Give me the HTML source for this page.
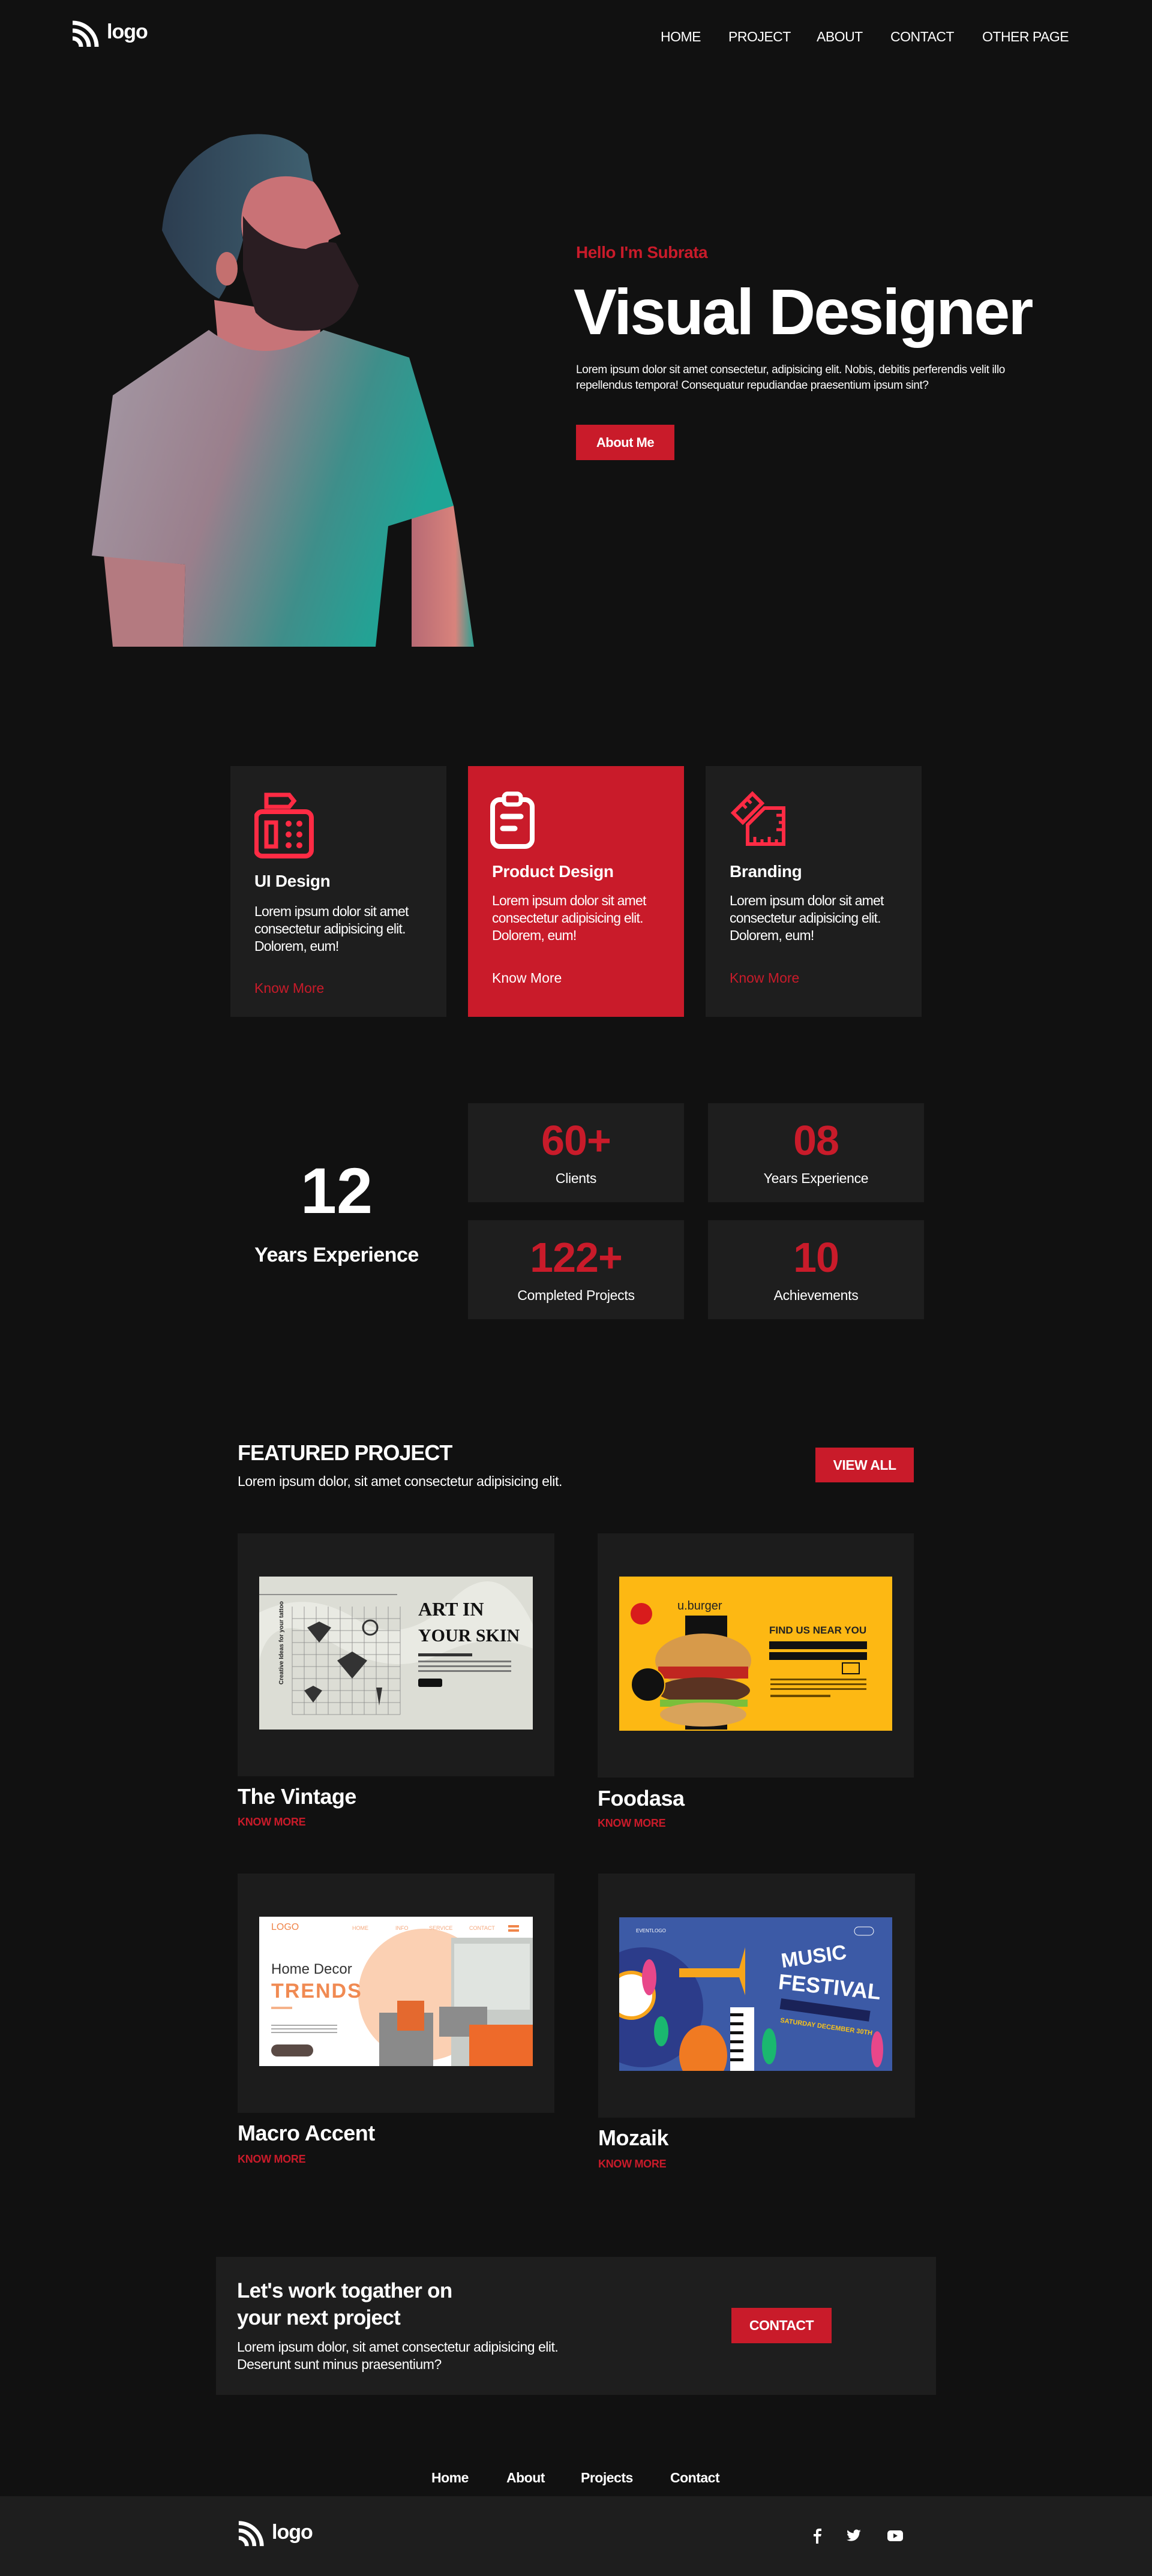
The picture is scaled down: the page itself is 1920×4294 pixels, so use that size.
<!DOCTYPE html>
<html><head><meta charset="utf-8">
<style>
*{margin:0;padding:0;box-sizing:border-box}
html,body{width:1920px;height:4294px;background:#111;overflow:hidden}
body{position:relative;font-family:"Liberation Sans",Arial,sans-serif;color:#fff}
.a{position:absolute}
.nav a{position:absolute;top:48px;font-size:23px;color:#fff;text-decoration:none;letter-spacing:-0.5px}
.card{position:absolute;background:#1e1e1e}
.card h3{position:absolute;left:40px;font-size:28px;font-weight:bold;letter-spacing:-0.3px}
.card p{position:absolute;left:40px;width:262px;font-size:23px;line-height:29px;letter-spacing:-0.8px}
.card .k{position:absolute;left:40px;font-size:23px;color:#c91b2a}
.stat{position:absolute;background:#1e1e1e;width:360px;height:165px;text-align:center}
.stat .n{position:absolute;left:0;right:0;top:22px;font-size:70px;font-weight:bold;color:#c91b2a;letter-spacing:-1px}
.stat .l{position:absolute;left:0;right:0;top:112px;font-size:23px;letter-spacing:-0.3px}
.pc{position:absolute;background:#1c1c1c}
.pt{position:absolute;font-size:36px;font-weight:bold;letter-spacing:-0.5px}
.km{position:absolute;font-size:18px;font-weight:bold;color:#c91b2a;letter-spacing:-0.3px}
.btn{position:absolute;background:#c91b2a;color:#fff;font-weight:bold;text-align:center}
</style></head><body>

<svg class="a" style="left:118px;top:32px" width="50" height="48" viewBox="0 0 50 48">
<path d="M3 6 A40 40 0 0 1 43 46" fill="none" stroke="#fff" stroke-width="7"/>
<path d="M3 19 A27 27 0 0 1 30 46" fill="none" stroke="#fff" stroke-width="7"/>
<path d="M3 32 A14 14 0 0 1 17 46" fill="none" stroke="#fff" stroke-width="7"/>
</svg>
<div class="a" style="left:178px;top:34px;font-size:34px;font-weight:bold;letter-spacing:-1px">logo</div>
<div class="nav">
<a style="left:1101px">HOME</a><a style="left:1214px">PROJECT</a><a style="left:1361px">ABOUT</a><a style="left:1484px">CONTACT</a><a style="left:1637px">OTHER PAGE</a>
</div>

<svg class="a" style="left:140px;top:200px" width="680" height="900" viewBox="0 0 680 900">
<defs>
<linearGradient id="sh" x1="0" x2="1" y1="0" y2="0.3">
<stop offset="0" stop-color="#a49aa6"/><stop offset="0.45" stop-color="#9a7f8c"/><stop offset="0.75" stop-color="#3f8e8a"/><stop offset="1" stop-color="#1fa596"/></linearGradient>
<linearGradient id="sk" x1="0" x2="1"><stop offset="0" stop-color="#b76a74"/><stop offset="0.7" stop-color="#d8837c"/><stop offset="1" stop-color="#2aa193"/></linearGradient>
<linearGradient id="hr" x1="0" x2="1"><stop offset="0" stop-color="#2c3d50"/><stop offset="1" stop-color="#3f6070"/></linearGradient>
</defs>
<path d="M33 726 L169 741 L165 878 L48 878 Z" fill="#b47a80"/>
<path d="M546 660 L616 643 L650 878 L546 878 Z" fill="url(#sk)"/>
<path d="M217 300 L395 330 L390 413 L225 390 Z" fill="#c77478"/>
<path d="M208 350 L48 459 L13 726 L169 741 L165 878 L486 878 L507 677 L616 643 L542 396 L399 350 Q300 420 208 350 Z" fill="url(#sh)"/>
<path d="M270 80 Q360 60 395 120 Q420 170 428 190 L408 200 Q400 240 380 260 L300 260 Q260 220 260 150 Z" fill="#c97276"/>
<path d="M265 160 Q300 210 370 215 Q400 200 420 205 L458 276 Q440 340 390 350 Q320 358 286 321 L265 250 Z" fill="#2a1d22"/>
<path d="M130 184 Q140 70 243 29 Q330 10 373 57 L382 103 Q320 80 278 115 Q255 150 265 200 Q250 260 225 298 Q170 270 130 184 Z" fill="url(#hr)"/>
<ellipse cx="238" cy="248" rx="18" ry="28" fill="#c4706f"/>
</svg>

<div class="a" style="left:960px;top:405px;font-size:28px;font-weight:bold;color:#c91b2a;letter-spacing:-0.5px">Hello I'm Subrata</div>
<div class="a" style="left:956px;top:455px;font-size:108px;font-weight:bold;letter-spacing:-3px;line-height:130px;white-space:nowrap">Visual Designer</div>
<div class="a" style="left:960px;top:604px;width:720px;font-size:19px;line-height:26px;letter-spacing:-0.4px">Lorem ipsum dolor sit amet consectetur, adipisicing elit. Nobis, debitis perferendis velit illo repellendus tempora! Consequatur repudiandae praesentium ipsum sint?</div>
<div class="btn" style="left:960px;top:708px;width:164px;height:59px;line-height:59px;font-size:22px;letter-spacing:-0.5px">About Me</div>

<div class="card" style="left:384px;top:1277px;width:360px;height:418px">
<svg class="a" style="left:40px;top:44px" width="100" height="110" viewBox="0 0 100 110">
<rect x="3" y="32" width="92" height="74" rx="10" fill="none" stroke="#ff2b44" stroke-width="8"/>
<path d="M20 4 H58 L66 14 L58 24 H20 Z" fill="none" stroke="#ff2b44" stroke-width="7"/>
<rect x="20" y="50" width="16" height="40" fill="none" stroke="#ff2b44" stroke-width="7"/>
<g fill="#ff2b44"><circle cx="57" cy="52" r="5"/><circle cx="75" cy="52" r="5"/><circle cx="57" cy="70" r="5"/><circle cx="75" cy="70" r="5"/><circle cx="57" cy="88" r="5"/><circle cx="75" cy="88" r="5"/></g>
</svg>
<h3 style="top:176px">UI Design</h3>
<p style="top:228px">Lorem ipsum dolor sit amet consectetur adipisicing elit. Dolorem, eum!</p>
<div class="k" style="top:357px">Know More</div>
</div>
<div class="card" style="left:780px;top:1277px;width:360px;height:418px;background:#c91b2a">
<svg class="a" style="left:36px;top:42px" width="80" height="96" viewBox="0 0 80 96">
<rect x="5" y="14" width="66" height="78" rx="12" fill="none" stroke="#fff" stroke-width="8"/>
<rect x="24" y="4" width="28" height="18" rx="6" fill="#c91b2a" stroke="#fff" stroke-width="7"/>
<path d="M22 42 H52 M22 62 H42" stroke="#fff" stroke-width="9" stroke-linecap="round"/>
</svg>
<h3 style="top:160px">Product Design</h3>
<p style="top:210px">Lorem ipsum dolor sit amet consectetur adipisicing elit. Dolorem, eum!</p>
<div class="k" style="top:340px;color:#fff">Know More</div>
</div>
<div class="card" style="left:1176px;top:1277px;width:360px;height:418px">
<svg class="a" style="left:38px;top:38px" width="100" height="100" viewBox="0 0 100 100">
<path d="M8 40 L40 8 L56 24 L24 56 Z" fill="none" stroke="#ff2b44" stroke-width="6"/>
<path d="M60 32 L92 32 L92 92 L32 92 L32 60 Z" fill="none" stroke="#ff2b44" stroke-width="6"/>
<path d="M44 92 V80 M56 92 V84 M68 92 V80 M80 92 V84 M92 44 H80 M92 56 H84 M92 68 H80" stroke="#ff2b44" stroke-width="5"/>
<path d="M22 24 L30 32 M30 16 L38 24" stroke="#ff2b44" stroke-width="5"/>
</svg>
<h3 style="top:160px">Branding</h3>
<p style="top:210px">Lorem ipsum dolor sit amet consectetur adipisicing elit. Dolorem, eum!</p>
<div class="k" style="top:340px">Know More</div>
</div>

<div class="a" style="left:381px;top:1925px;width:360px;text-align:center;font-size:108px;font-weight:bold;line-height:120px">12</div>
<div class="a" style="left:381px;top:2073px;width:360px;text-align:center;font-size:34px;font-weight:bold;letter-spacing:-0.5px">Years Experience</div>
<div class="stat" style="left:780px;top:1839px"><div class="n">60+</div><div class="l">Clients</div></div>
<div class="stat" style="left:1180px;top:1839px"><div class="n">08</div><div class="l">Years Experience</div></div>
<div class="stat" style="left:780px;top:2034px"><div class="n">122+</div><div class="l">Completed Projects</div></div>
<div class="stat" style="left:1180px;top:2034px"><div class="n">10</div><div class="l">Achievements</div></div>

<div class="a" style="left:396px;top:2401px;font-size:36px;font-weight:bold;letter-spacing:-1px">FEATURED PROJECT</div>
<div class="a" style="left:396px;top:2456px;font-size:23px;letter-spacing:-0.4px">Lorem ipsum dolor, sit amet consectetur adipisicing elit.</div>
<div class="btn" style="left:1359px;top:2413px;width:164px;height:58px;line-height:58px;font-size:23px;letter-spacing:-0.5px">VIEW ALL</div>

<div class="pc" style="left:396px;top:2556px;width:528px;height:405px"></div>
<svg class="a" style="left:432px;top:2628px" width="456" height="255" viewBox="0 0 456 255">
<rect width="456" height="255" fill="#dcddd5"/>
<path d="M0 60 Q80 20 160 70 T320 40 T456 80 V120 Q380 90 300 130 T120 110 T0 140Z" fill="#e9eae3"/>
<g stroke="#888" stroke-width="0.8" fill="none">
<path d="M55 50 V230 M75 50 V230 M95 50 V230 M115 50 V230 M135 50 V230 M155 50 V230 M175 50 V230 M195 50 V230 M215 50 V230 M235 50 V230"/>
<path d="M55 70 H235 M55 90 H235 M55 110 H235 M55 130 H235 M55 150 H235 M55 170 H235 M55 190 H235 M55 210 H235 M55 230 H235"/>
</g>
<path d="M0 30 H230" stroke="#777" stroke-width="1.5"/>
<path d="M80 85 l20 -10 l20 10 l-20 25z M130 140 l25 -15 l25 15 l-25 30z M75 190 l15 -8 l15 8 l-15 20z M195 185 l10 0 l-5 30z" fill="#333"/>
<circle cx="185" cy="85" r="12" fill="none" stroke="#333" stroke-width="3"/>
<text x="265" y="65" font-family="Liberation Serif" font-weight="bold" font-size="32" fill="#111">ART IN</text>
<text x="265" y="108" font-family="Liberation Serif" font-weight="bold" font-size="30" fill="#111">YOUR SKIN</text>
<rect x="265" y="128" width="90" height="5" fill="#333"/>
<g fill="#777"><rect x="265" y="140" width="155" height="3"/><rect x="265" y="148" width="155" height="3"/><rect x="265" y="156" width="155" height="3"/></g>
<rect x="265" y="170" width="40" height="14" rx="3" fill="#111"/>
<text x="40" y="180" transform="rotate(-90 40 180)" font-size="10" font-weight="bold" fill="#222">Creative Ideas for your tattoo</text>
</svg>
<div class="pt" style="left:396px;top:2974px">The Vintage</div>
<div class="km" style="left:396px;top:3027px">KNOW MORE</div>

<div class="pc" style="left:996px;top:2556px;width:527px;height:407px"></div>
<svg class="a" style="left:1032px;top:2628px" width="455" height="257" viewBox="0 0 455 257">
<rect width="455" height="257" fill="#fdb813"/>
<rect x="110" y="65" width="70" height="190" fill="#111"/>
<ellipse cx="140" cy="140" rx="80" ry="45" fill="#d79a4a"/>
<rect x="65" y="150" width="150" height="20" fill="#c02620"/>
<ellipse cx="140" cy="190" rx="78" ry="22" fill="#5a3322"/>
<rect x="68" y="205" width="146" height="12" fill="#7bbf3a"/>
<ellipse cx="140" cy="230" rx="72" ry="20" fill="#d9a35a"/>
<circle cx="37" cy="62" r="18" fill="#d81c1c"/>
<circle cx="48" cy="180" r="28" fill="#111" stroke="#fdb813" stroke-width="2"/>
<text x="97" y="55" font-size="20" fill="#222">u.burger</text>
<text x="250" y="95" font-size="17" font-weight="bold" fill="#222">FIND US NEAR YOU</text>
<rect x="250" y="108" width="163" height="13" fill="#111"/>
<rect x="250" y="126" width="163" height="13" fill="#111"/>
<rect x="372" y="144" width="28" height="18" fill="none" stroke="#111" stroke-width="2"/>
<g fill="#6b4a00"><rect x="252" y="170" width="160" height="3"/><rect x="252" y="178" width="160" height="3"/><rect x="252" y="186" width="160" height="3"/><rect x="252" y="197" width="100" height="4"/></g>
</svg>
<div class="pt" style="left:996px;top:2977px">Foodasa</div>
<div class="km" style="left:996px;top:3029px">KNOW MORE</div>

<div class="pc" style="left:396px;top:3123px;width:528px;height:399px"></div>
<svg class="a" style="left:432px;top:3195px" width="456" height="249" viewBox="0 0 456 249">
<rect width="456" height="249" fill="#fff"/>
<circle cx="275" cy="130" r="110" fill="#fbd0b3"/>
<rect x="320" y="35" width="136" height="214" fill="#c8ccc8"/>
<rect x="325" y="45" width="126" height="110" fill="#e0e4e0"/>
<rect x="200" y="160" width="90" height="89" fill="#8a8a8a"/>
<rect x="300" y="150" width="80" height="50" fill="#8c8c8c"/>
<rect x="350" y="180" width="106" height="69" fill="#ee6a2a"/>
<rect x="230" y="140" width="45" height="50" fill="#e4692f"/>
<text x="20" y="22" font-size="16" fill="#f0854a">LOGO</text>
<g font-size="9" fill="#f5a97e"><text x="155" y="22">HOME</text><text x="227" y="22">INFO</text><text x="283" y="22">SERVICE</text><text x="350" y="22">CONTACT</text></g>
<rect x="415" y="14" width="18" height="4" fill="#f0854a"/><rect x="415" y="21" width="18" height="4" fill="#f0854a"/>
<text x="20" y="95" font-size="24" fill="#333">Home Decor</text>
<text x="20" y="135" font-size="34" font-weight="bold" fill="#f08a52" letter-spacing="2">TRENDS</text>
<rect x="20" y="150" width="35" height="4" fill="#f5b28a"/>
<g fill="#aaa"><rect x="20" y="180" width="110" height="2"/><rect x="20" y="186" width="110" height="2"/><rect x="20" y="192" width="110" height="2"/></g>
<rect x="20" y="213" width="70" height="20" rx="10" fill="#5a4a45"/>
</svg>
<div class="pt" style="left:396px;top:3535px">Macro Accent</div>
<div class="km" style="left:396px;top:3589px">KNOW MORE</div>

<div class="pc" style="left:997px;top:3123px;width:528px;height:407px"></div>
<svg class="a" style="left:1032px;top:3196px" width="455" height="256" viewBox="0 0 455 256">
<rect width="455" height="256" fill="#3c5aa6"/>
<circle cx="40" cy="150" r="100" fill="#2c3c8a"/>
<path d="M100 85 H200 L210 50 L210 130 L200 100 H100 Z" fill="#f7a51b"/>
<circle cx="20" cy="130" r="38" fill="#fff" stroke="#f7a51b" stroke-width="6"/>
<ellipse cx="140" cy="230" rx="40" ry="50" fill="#f07a22"/>
<rect x="185" y="150" width="40" height="106" fill="#fff"/>
<g fill="#111"><rect x="185" y="160" width="22" height="5"/><rect x="185" y="175" width="22" height="5"/><rect x="185" y="190" width="22" height="5"/><rect x="185" y="205" width="22" height="5"/><rect x="185" y="220" width="22" height="5"/><rect x="185" y="235" width="22" height="5"/></g>
<ellipse cx="50" cy="100" rx="12" ry="30" fill="#e8478a"/>
<ellipse cx="70" cy="190" rx="12" ry="25" fill="#1ab86f"/>
<ellipse cx="250" cy="215" rx="12" ry="30" fill="#1ab86f"/>
<ellipse cx="430" cy="220" rx="10" ry="30" fill="#e8478a"/>
<text x="270" y="80" font-size="34" font-weight="bold" fill="#fff" transform="rotate(-8 300 70)">MUSIC</text>
<text x="265" y="125" font-size="36" font-weight="bold" fill="#fff" transform="rotate(6 320 115)">FESTIVAL</text>
<rect x="268" y="145" width="150" height="18" fill="#1a2258" transform="rotate(8 340 155)"/>
<text x="268" y="185" font-size="11" font-weight="bold" fill="#f7c31b" transform="rotate(8 340 180)">SATURDAY DECEMBER 30TH</text>
<text x="28" y="25" font-size="8" fill="#fff">EVENTLOGO</text>
<rect x="392" y="16" width="32" height="14" rx="7" fill="none" stroke="#fff"/>
</svg>
<div class="pt" style="left:997px;top:3543px">Mozaik</div>
<div class="km" style="left:997px;top:3597px">KNOW MORE</div>

<div class="a" style="left:360px;top:3762px;width:1200px;height:230px;background:#1e1e1e"></div>
<div class="a" style="left:395px;top:3796px;font-size:35px;font-weight:bold;line-height:45px;letter-spacing:-0.7px">Let's work togather on<br>your next project</div>
<div class="a" style="left:395px;top:3898px;font-size:23px;line-height:29px;letter-spacing:-0.5px">Lorem ipsum dolor, sit amet consectetur adipisicing elit.<br>Deserunt sunt minus praesentium?</div>
<div class="btn" style="left:1219px;top:3847px;width:167px;height:59px;line-height:59px;font-size:23px;letter-spacing:-0.5px">CONTACT</div>

<div class="a" style="left:719px;top:4117px;font-size:23px;font-weight:bold;letter-spacing:-0.5px">Home</div>
<div class="a" style="left:844px;top:4117px;font-size:23px;font-weight:bold;letter-spacing:-0.5px">About</div>
<div class="a" style="left:968px;top:4117px;font-size:23px;font-weight:bold;letter-spacing:-0.5px">Projects</div>
<div class="a" style="left:1117px;top:4117px;font-size:23px;font-weight:bold;letter-spacing:-0.5px">Contact</div>

<div class="a" style="left:0;top:4161px;width:1920px;height:133px;background:#1e1e1e"></div>
<svg class="a" style="left:395px;top:4199px" width="48" height="48" viewBox="0 0 50 48">
<path d="M3 6 A40 40 0 0 1 43 46" fill="none" stroke="#fff" stroke-width="7"/>
<path d="M3 19 A27 27 0 0 1 30 46" fill="none" stroke="#fff" stroke-width="7"/>
<path d="M3 32 A14 14 0 0 1 17 46" fill="none" stroke="#fff" stroke-width="7"/>
</svg>
<div class="a" style="left:453px;top:4202px;font-size:34px;font-weight:bold;letter-spacing:-1px">logo</div>
<svg class="a" style="left:1354px;top:4214px" width="16" height="26" viewBox="0 0 16 26"><path d="M10 26 V14 H14 L15 10 H10 V7 Q10 5 12 5 H15 V1 H11 Q6 1 6 6 V10 H2 V14 H6 V26 Z" fill="#fff"/></svg>
<svg class="a" style="left:1410px;top:4216px" width="26" height="22" viewBox="0 0 24 20"><path d="M23 2.5c-.8.4-1.7.6-2.6.7.9-.6 1.6-1.4 2-2.5-.9.5-1.9.9-2.9 1.1A4.5 4.5 0 0 0 11.8 5.9 12.8 12.8 0 0 1 2.5 1.2a4.5 4.5 0 0 0 1.4 6c-.7 0-1.4-.2-2-.6 0 2.2 1.5 4 3.6 4.4-.7.2-1.4.2-2 .1.6 1.8 2.3 3.1 4.2 3.1A9 9 0 0 1 .9 16.1 12.8 12.8 0 0 0 7.8 18c8.3 0 12.8-6.9 12.8-12.8v-.6c.9-.6 1.6-1.4 2.4-2.1z" fill="#fff"/></svg>
<svg class="a" style="left:1478px;top:4217px" width="28" height="20" viewBox="0 0 28 20"><rect x="1" y="1" width="26" height="18" rx="5" fill="#fff"/><path d="M11 6 L18 10 L11 14 Z" fill="#1e1e1e"/></svg>

</body></html>
